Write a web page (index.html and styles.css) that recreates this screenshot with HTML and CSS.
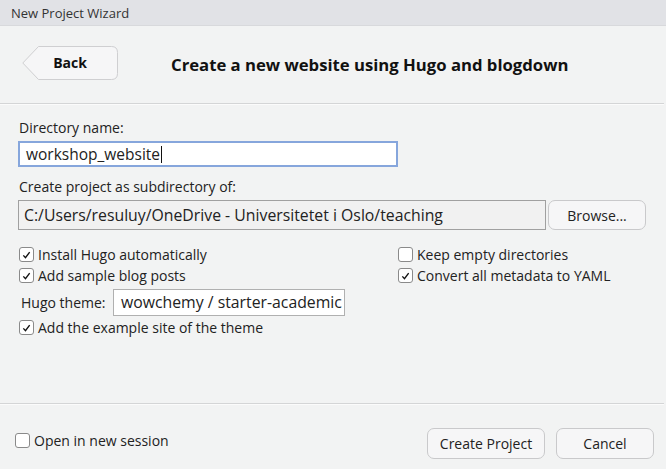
FILE: index.html
```html
<!DOCTYPE html>
<html>
<head>
<meta charset="utf-8">
<link rel="stylesheet" href="styles.css">
</head>
<body>
<div class="window">
  <div class="titlebar">New Project Wizard</div>
  <div class="header">
    <button class="back">
      <svg class="back-shape" width="96" height="34" viewBox="0 0 96 34"><path d="M16.5 0.5 H89.5 Q95.5 0.5 95.5 6.5 V27.5 Q95.5 33.5 89.5 33.5 H16.5 L0.8 17 Z" fill="#f6f6f7" stroke="#cfcfd1"/></svg>
      <span class="back-label">Back</span>
    </button>
    <h1 class="heading">Create a new website using Hugo and blogdown</h1>
  </div>
  <div class="sep"></div>
  <div class="content">
    <div class="label">Directory name:</div>
    <div class="input dir"><span>workshop_website</span><span class="caret"></span></div>
    <div class="label lbl2">Create project as subdirectory of:</div>
    <div class="path-row">
      <div class="input path">C:/Users/resuluy/OneDrive - Universitetet i Oslo/teaching</div>
      <button class="btn browse">Browse...</button>
    </div>
    <div class="options">
      <div class="col left">
        <label class="check"><span class="box on"><svg viewBox="0 0 14 14" width="14" height="14"><path d="M3.6 7.4 L5.9 9.9 L10.4 3.9" fill="none" stroke="#111" stroke-width="1.5"/></svg></span>Install Hugo automatically</label>
        <label class="check"><span class="box on"><svg viewBox="0 0 14 14" width="14" height="14"><path d="M3.6 7.4 L5.9 9.9 L10.4 3.9" fill="none" stroke="#111" stroke-width="1.5"/></svg></span>Add sample blog posts</label>
        <div class="theme-row">
          <span class="theme-label">Hugo theme:</span>
          <div class="input theme">wowchemy / starter-academic</div>
        </div>
        <label class="check"><span class="box on"><svg viewBox="0 0 14 14" width="14" height="14"><path d="M3.6 7.4 L5.9 9.9 L10.4 3.9" fill="none" stroke="#111" stroke-width="1.5"/></svg></span>Add the example site of the theme</label>
      </div>
      <div class="col right">
        <label class="check"><span class="box"></span>Keep empty directories</label>
        <label class="check"><span class="box on"><svg viewBox="0 0 14 14" width="14" height="14"><path d="M3.6 7.4 L5.9 9.9 L10.4 3.9" fill="none" stroke="#111" stroke-width="1.5"/></svg></span>Convert all metadata to YAML</label>
      </div>
    </div>
  </div>
  <div class="sep"></div>
  <div class="footer">
    <label class="check session"><span class="box"></span>Open in new session</label>
    <div class="actions">
      <button class="btn create">Create Project</button>
      <button class="btn cancel">Cancel</button>
    </div>
  </div>
</div>
</body>
</html>
```
FILE: styles.css
```css
* { box-sizing: border-box; }
html, body { margin: 0; padding: 0; }
body {
  width: 666px;
  height: 469px;
  background: #f2f3f3;
  font-family: "Open Sans", "Noto Sans", sans-serif;
  color: #222;
  overflow: hidden;
}
.window { display: flex; flex-direction: column; height: 469px; }
.titlebar {
  height: 26px;
  background: #e1e2e6;
  border-bottom: 1px solid #d8d9dc;
  padding-left: 11px;
  font-size: 13px;
  line-height: 26px;
  color: #333;
}
.header {
  height: 77px;
  display: flex;
  align-items: center;
  padding-left: 22px;
}
.back {
  position: relative;
  width: 96px;
  height: 34px;
  border: 0;
  background: none;
  padding: 0;
  margin: 0 0 3px 0;
  font-family: inherit;
}
.back-shape { position: absolute; left: 0; top: 0; }
.back-label {
  position: relative;
  display: block;
  font-weight: 700;
  font-size: 14px;
  color: #111;
  text-align: center;
  line-height: 34px;
}
.heading {
  margin: 0 0 1px 53px;
  font-size: 16.7px;
  font-weight: 700;
  color: #111;
}
.sep {
  height: 2px;
  border-top: 1px solid #d4d5d6;
  border-bottom: 1px solid #fbfbfb;
  margin-right: 2px;
}
.content {
  flex: 1;
  padding: 13px 0 0 18px;
}
.label {
  font-size: 14px;
  color: #222;
  padding-left: 1px;
  line-height: 19px;
}
.input {
  background: #fff;
  border: 1px solid #a8a8a8;
  color: #222;
  white-space: nowrap;
  overflow: hidden;
}
.dir {
  width: 380px;
  height: 26px;
  margin-top: 4px;
  border: 2px solid #86a6dc;
  font-size: 15.5px;
  line-height: 22px;
  padding-left: 6px;
  display: flex;
  align-items: center;
}
.caret { display: inline-block; width: 1px; height: 17px; background: #111; margin-left: 1px; }
.lbl2 { margin-top: 10px; }
.path-row { display: flex; gap: 2px; margin-top: 4px; }
.path {
  width: 528px;
  height: 30px;
  background: #f1f1f1;
  border-color: #a0a0a0;
  font-size: 15.8px;
  line-height: 28px;
  padding-left: 5px;
}
.btn {
  font-family: inherit;
  background: #f6f6f7;
  border: 1px solid #c9c9cb;
  border-radius: 7px;
  color: #222;
  font-size: 14px;
  padding: 0;
}
.browse { width: 98px; height: 30px; }
.options {
  display: flex;
  margin-top: 14px;
}
.col { display: flex; flex-direction: column; }
.left { width: 380px; padding-left: 1px; }
.check {
  display: flex;
  align-items: center;
  height: 21px;
  font-size: 14px;
  color: #222;
}
.box {
  width: 15px;
  height: 15px;
  border: 1px solid #8a8a8a;
  border-radius: 3px;
  background: #fff;
  margin-right: 4px;
  display: inline-flex;
  align-items: center;
  justify-content: center;
  flex: none;
}
.box svg { display: block; }
.theme-row {
  display: flex;
  align-items: center;
  margin: 3px 0 1px 0;
  padding-left: 2px;
}
.theme-label { font-size: 14px; width: 92px; }
.theme {
  width: 232px;
  height: 27px;
  font-size: 15.8px;
  line-height: 25px;
  padding-left: 7px;
  border-color: #b0b0b0;
}
.footer {
  height: 64px;
  display: flex;
  justify-content: space-between;
  padding: 0 12px 0 15px;
}
.session { margin-top: 25px; }
.actions { display: flex; gap: 11px; align-self: flex-end; margin-bottom: 10px; }
.create { width: 118px; height: 31px; }
.cancel { width: 98px; height: 31px; }
```
